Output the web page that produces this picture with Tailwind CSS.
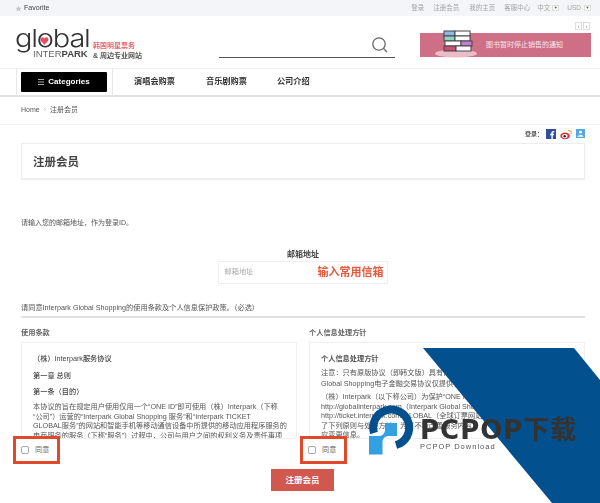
<!DOCTYPE html>
<html lang="zh">
<head>
    <meta charset="utf-8">
    <title>注册会员</title>
    <script src="https://cdn.jsdelivr.net/npm/@tailwindcss/browser@4"></script>
</head>
<body class="bg-white overflow-hidden">
<div class="relative w-[600px] h-[503px] overflow-hidden font-['Liberation_Sans','Noto_Sans_CJK_SC',sans-serif] text-[#444] blur-[0.6px]">

    <!-- top bar -->
    <div class="h-4 bg-[#f4f5f9] flex items-center justify-between pl-[15px] pr-[9px] text-[7px]">
        <div class="flex items-center gap-[2px] text-[#444]">
            <svg class="w-[7px] h-[7px]" viewBox="0 0 24 24" fill="#c4c4c4"><path d="M12 2l3 7 7.500 .6-5.700 4.900 1.800 7.500L12 18l-6.600 4 1.800-7.500L1.500 9.600 9 9z"/></svg>
            <span>Favorite</span>
        </div>
        <div class="flex items-center text-[#a5a5a5] text-[6.500px]">
            <span class="mr-[9px]">登录</span>
            <span class="mr-[10px]">注册会员</span>
            <span class="mr-[9px]">我的主页</span>
            <span class="mr-[7px]">客服中心</span>
            <span>中文</span>
            <span class="ml-[2px] mr-[8px] w-[7px] h-[6px] border border-[#ddd] bg-white flex items-center justify-center text-[#555] text-[4px] leading-none">▼</span>
            <span class="text-[6.500px]">USD</span>
            <span class="ml-[3px] w-[7px] h-[6px] border border-[#ddd] bg-white flex items-center justify-center text-[#555] text-[4px] leading-none">▼</span>
        </div>
    </div>

    <!-- logo, search, banner -->
    <div class="relative h-[52px] flex items-start pl-[15px]">
        <div class="relative w-[72px] h-[42px] mt-[14px]">
            <div class="absolute left-0 top-[-10px] font-['Inter'] font-light text-[29px] leading-[36px] tracking-[-1.200px] text-[#333] scale-y-[0.85]">global</div>
            <svg class="absolute left-[25px] top-[7px] w-[9px] h-[8px]" viewBox="0 0 24 22" fill="#e8505b"><path d="M12 21C5 15 1 11 1 6.500 1 3 4 1 6.500 1 9 1 11 2.500 12 5c1-2.500 3-4 5.500-4C20 1 23 3 23 6.500 23 11 19 15 12 21z"/></svg>
            <div class="absolute left-[18px] top-[19px] text-[9.500px] leading-[10px] text-[#666] whitespace-nowrap">INTER<span class="font-bold text-[#444]">PARK</span></div>
        </div>
        <div class="ml-[6px] mt-[25px] text-[7px] leading-[9px] font-bold">
            <div class="text-[#e56a6f] mb-[1px]">韩国明星票务</div>
            <div class="text-[#555]">&amp; 周边专业网站</div>
        </div>
        <div class="ml-[77px] mt-[18px] w-[176px] h-[24px] border-b border-[#555] flex justify-end pr-[6px]">
            <svg class="w-[18px] h-[18px] mt-[2px]" viewBox="0 0 18 18" fill="none" stroke="#666" stroke-width="1.300"><circle cx="8" cy="8" r="6.200"/><path d="M12.500 12.500l3.500 3.500"/></svg>
        </div>
        <div class="absolute right-[10px] top-[6px] flex gap-[1px]">
            <span class="w-[7px] h-[8px] border border-[#ddd] text-[#777] text-[5px] leading-[6px] text-center">‹</span>
            <span class="w-[7px] h-[8px] border border-[#ddd] text-[#777] text-[5px] leading-[6px] text-center">›</span>
        </div>
        <div class="absolute left-[420px] top-[17px] w-[171px] h-[24px] bg-[#cf6f87] flex items-center justify-start pl-[66px] text-[7px] text-[#f8e6ea]">图书暂时停止销售的通知</div>
        <svg class="absolute left-[434px] top-[14px] w-[44px] h-[28px]" viewBox="0 0 44 28">
            <ellipse cx="22" cy="23.500" rx="21" ry="4" fill="#e9bcc8"/>
            <g stroke="#444" stroke-width="1">
                <rect x="10" y="1" width="11" height="5" fill="#8fb7e6"/><rect x="21" y="1" width="15" height="5" fill="#fff"/>
                <rect x="10" y="6" width="11" height="5" fill="#8ed2c0"/><rect x="21" y="6" width="15" height="5" fill="#fff"/>
                <rect x="11" y="11" width="16" height="5" fill="#fff"/><rect x="27" y="11" width="11" height="5" fill="#c97fd0"/>
                <rect x="10" y="16" width="12" height="5" fill="#c94f70"/><rect x="22" y="16" width="15" height="5" fill="#fff"/>
            </g>
        </svg>
    </div>

    <!-- nav -->
    <div class="h-[29px] border-t border-[#eee] border-b-2 border-b-[#e2e2e2] pl-4 flex items-stretch">
        <div class="w-[97px] border-x border-[#e8e8e8] flex items-center pl-[4px]">
            <div class="w-[86px] h-[20px] bg-black rounded-[1px] flex items-center justify-center gap-[4px] text-white text-[8px] font-bold">
                <svg class="w-[6px] h-[6px]" viewBox="0 0 6 6" fill="#aaa"><rect y="0" width="6" height="1"/><rect y="2.500" width="6" height="1"/><rect y="5" width="6" height="1"/></svg>
                <span>Categories</span>
            </div>
        </div>
        <div class="flex items-center text-[8.200px] font-bold text-[#333]">
            <span class="ml-[21px]">演唱会购票</span>
            <span class="ml-[31px]">音乐剧购票</span>
            <span class="ml-[30px]">公司介绍</span>
        </div>
    </div>

    <!-- breadcrumb -->
    <div class="h-[28px] border-b border-[#f3f3f3] pl-[21px] flex items-center text-[7px] text-[#555]">
        <span>Home</span><span class="mx-[4px] text-[#bbb]">›</span><span>注册会员</span>
    </div>

    <div class="ml-[21px] w-[564px]">
        <!-- social login -->
        <div class="h-[18px] flex items-center justify-end gap-[3px] text-[6px] font-bold text-[#555]">
            <span>登录：</span>
            <svg class="w-[10px] h-[10px]" viewBox="0 0 10 10"><rect width="10" height="10" fill="#2f4f96"/><path d="M6.800 10V6.200h1.200l.2-1.400H6.800V4c0-.5.2-.8.8-.8h.7V2c-.3 0-.7-.1-1.100-.1-1.100 0-1.800.7-1.800 1.900v1H4.200v1.400h1.200V10z" fill="#fff"/></svg>
            <svg class="w-3 h-[11px] ml-[1px]" viewBox="0 0 13 11"><ellipse cx="5.500" cy="7" rx="5.200" ry="3.700" fill="#d9363e"/><ellipse cx="5.200" cy="7.200" rx="3" ry="2.300" fill="#fff"/><circle cx="5" cy="7.300" r="1.300" fill="#222"/><path d="M8.500 1a3.500 3.500 0 0 1 3.800 4" fill="none" stroke="#f3a93c" stroke-width="1.200"/></svg>
            <svg class="w-[9px] h-[9px] ml-[1px] mb-[2px]" viewBox="0 0 10 10"><rect width="10" height="10" fill="#58a6e0"/><circle cx="5" cy="3.500" r="1.600" fill="#fff"/><path d="M1.500 8.500c1-2.500 6-2.500 7 0z" fill="#fff"/></svg>
        </div>

        <!-- title -->
        <div class="h-[36px] border border-[#eee] shadow-[0_1px_1px_#eee] flex items-center pl-[11px] pt-[3px] text-[11.500px] font-bold text-[#444]">注册会员</div>

        <p class="mt-[38px] h-[12px] text-[7px] leading-[12px] text-[#555]">请输入您的邮箱地址，作为登录ID。</p>

        <!-- email -->
        <div class="mt-[20px] flex flex-col items-center">
            <div class="h-[12px] w-full text-center text-[8px] leading-[12px] font-bold text-[#444]">邮箱地址</div>
            <div class="w-[170px] h-[23px] ml-[-1px] border border-[#eee] flex items-center justify-between pl-[6px] pr-[3px]">
                <span class="text-[7.200px] text-[#aaa]">邮箱地址</span>
                <span class="text-[11px] font-bold text-[#e4593c]">输入常用信箱</span>
            </div>
        </div>

        <!-- terms heading -->
        <div class="mt-[19px] h-[15px] border-b-2 border-[#e2e2e2] text-[7.200px] leading-[10px] text-[#555]">请同意Interpark Global Shopping的使用条款及个人信息保护政策。（必选）</div>

        <div class="mt-[9px] grid grid-cols-2 gap-x-[12px]">
            <div>
                <div class="h-[15px] text-[7.200px] font-bold text-[#666] leading-[12px]">使用条款</div>
                <div class="h-[97px] overflow-hidden border border-[#f0f0f0] px-[11px] text-[7.200px] text-[#444] whitespace-nowrap">
                    <p class="mt-[11px] leading-[10px] font-medium">（株）Interpark服务协议</p>
                    <p class="mt-[7px] leading-[10px] font-medium">第一章 总则</p>
                    <p class="mt-[6px] leading-[10px] font-medium">第一条（目的）</p>
                    <p class="mt-[5px] leading-[9.500px] text-[#555]">本协议的旨在规定用户使用仅用一个“ONE ID”即可使用（株）Interpark（下称<br>“公司”）运营的“Interpark Global Shopping 服务”和“Interpark TICKET<br>GLOBAL服务”的网站和智能手机等移动通信设备中所提供的移动应用程序服务的<br>电商服务的服务（下称“服务”）过程中，公司与用户之间的权利义务及责任事项</p>
                </div>
            </div>
            <div>
                <div class="h-[15px] text-[7.200px] font-bold text-[#666] leading-[12px]">个人信息处理方针</div>
                <div class="h-[97px] overflow-hidden border border-[#f0f0f0] px-[11px] text-[7.200px] text-[#555] whitespace-nowrap">
                    <p class="mt-[11px] leading-[10px] font-bold text-[#555]">个人信息处理方针</p>
                    <p class="mt-[3px] leading-[11px]">注意：只有原版协议（即韩文版）具有法律效力，翻译版本<br>Global Shopping电子金融交易协议仅提供参考。</p>
                    <p class="mt-[3px] leading-[9.500px]">（株）Interpark（以下称公司）为保护“ONE ID”用户的个人信息<br>http://globalinterpark.com（Interpark Global Shopping）<br>http://ticket.interpark.com/GLOBAL（全球订票网站）<br>了下列原则与处理方针。为了不断改善服务内容，<br>应变更信息。</p>
                </div>
            </div>
        </div>

        <!-- submit -->
        <div class="mt-[30px] flex justify-center">
            <button class="w-[63px] h-[22px] ml-[-1px] bg-[#d0584f] text-white text-[8.500px] font-bold">注册会员</button>
        </div>
    </div>

    <!-- red highlights on the checkboxes -->
    <div class="absolute left-[13px] top-[436px] w-[47px] h-[28px] border-[3px] border-[#e2492b] bg-white flex items-center pl-[5px] gap-[6px] text-[7.200px] text-[#666]">
        <span class="w-2 h-2 border border-[#aaa] rounded-[2px]"></span><span>同意</span>
    </div>
    <div class="absolute left-[300px] top-[436px] w-[47px] h-[28px] border-[3px] border-[#e2492b] bg-white flex items-center pl-[5px] gap-[6px] text-[7.200px] text-[#666]">
        <span class="w-2 h-2 border border-[#aaa] rounded-[2px]"></span><span>同意</span>
    </div>

    <!-- PCPOP watermark -->
    <svg class="absolute left-0 top-0 w-[600px] h-[503px]" viewBox="0 0 600 503">
        <polygon points="423,348 574,348 600,380 600,503 552,503" fill="#03508f"/>
        <path d="M374 433A18 18 0 1 1 396 445" fill="none" stroke="#03508f" stroke-width="8"/>
        <path d="M369 454.500V436h9.500c4 0 6.500-2.500 6.500-6.500V423h12v13h-8c-4 0-6.500 2.500-6.500 6.500v12z" fill="#33a0e2"/>
    </svg>
    <div class="absolute left-[420px] top-[416px] text-[26px] leading-[28px] font-bold tracking-[1px] text-[#333] whitespace-nowrap font-['DejaVu_Sans','Noto_Sans_CJK_SC',sans-serif]">PCPOP下载</div>
    <div class="absolute left-[420px] top-[442px] text-[7.500px] leading-[10px] tracking-[1px] text-[#555]">PCPOP Download</div>
</div>
</body>
</html>
